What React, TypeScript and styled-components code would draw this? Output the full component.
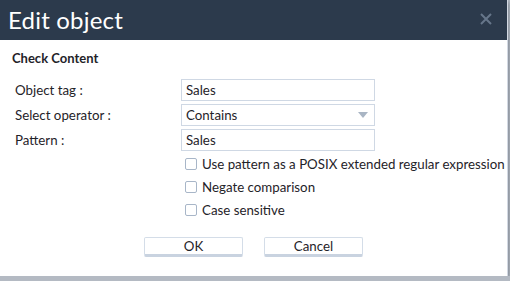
import React from 'react';
import styled, { createGlobalStyle } from 'styled-components';

const GlobalStyle = createGlobalStyle`
  html, body {
    margin: 0;
    padding: 0;
    background: #b4bac3;
    font-family: Lato, 'Open Sans', sans-serif;
  }
  * { box-sizing: border-box; }
`;

const Dialog = styled.div`
  width: 508px;
  height: 276px;
  background: #ffffff;
  border-right: 1px solid #d3d9e3;
  box-shadow: 1px 2px 4px rgba(60, 70, 85, 0.45);
  display: flex;
  flex-direction: column;
`;

const Header = styled.div`
  height: 40px;
  background: #2c3a4c;
  display: flex;
  align-items: center;
  justify-content: space-between;
  padding: 0 14px 2px 8px;
`;

const Title = styled.h1`
  margin: 0;
  font-size: 24px;
  font-weight: 400;
  color: #ffffff;
  letter-spacing: 0.2px;
`;

const Close = styled.button`
  border: 0;
  background: none;
  padding: 0;
  width: 14px;
  height: 14px;
  display: flex;
  cursor: pointer;
`;

const Body = styled.div`
  padding: 10px 4px 0 12px;
  display: flex;
  flex-direction: column;
`;

const Section = styled.div`
  font-size: 13px;
  font-weight: 700;
  color: #1f2329;
  margin-bottom: 13px;
`;

const Form = styled.div`
  display: grid;
  grid-template-columns: 166px 194px;
  row-gap: 3px;
  padding-left: 3px;
`;

const Label = styled.label`
  font-size: 13.3px;
  color: #1f2329;
  display: flex;
  align-items: center;
  height: 22px;
`;

const Field = styled.div`
  height: 22px;
  border: 1px solid #cfd8e4;
  font-size: 13.3px;
  color: #1f2329;
  padding: 0 0 0 4px;
  display: flex;
  align-items: center;
  justify-content: space-between;
`;

const Caret = styled.span`
  width: 0;
  height: 0;
  border-left: 5px solid transparent;
  border-right: 5px solid transparent;
  border-top: 6px solid #a9b5c4;
  margin-right: 6px;
`;

const Options = styled.div`
  display: flex;
  flex-direction: column;
  gap: 11px;
  margin: 7px 0 0 173px;
`;

const Option = styled.label`
  display: flex;
  align-items: center;
  gap: 5px;
  font-size: 13.3px;
  color: #1f2329;
  white-space: nowrap;
  height: 12px;
`;

const Box = styled.span`
  flex-shrink: 0;
  width: 12px;
  height: 12px;
  border: 1px solid #a8b6c8;
  border-radius: 2px;
  background: #fff;
`;

const Buttons = styled.div`
  display: flex;
  justify-content: center;
  gap: 21px;
  margin-top: 21px;
  padding-right: 8px;
`;

const Button = styled.button`
  width: 99px;
  height: 20px;
  background: #ffffff;
  border: 1px solid #d4dde8;
  border-bottom: 3px solid #c9d3e0;
  border-radius: 2px;
  font-family: inherit;
  font-size: 13.3px;
  color: #1f2329;
  padding: 0;
  line-height: 16px;
`;

const options = [
  'Use pattern as a POSIX extended regular expression',
  'Negate comparison',
  'Case sensitive',
];

export default function App() {
  return (
    <>
      <GlobalStyle />
      <Dialog>
        <Header>
          <Title>Edit object</Title>
          <Close aria-label="close">
            <svg width="14" height="14" viewBox="0 0 14 14">
              <path d="M2 2 L12 12 M12 2 L2 12" stroke="#66768a" strokeWidth="2" />
            </svg>
          </Close>
        </Header>
        <Body>
          <Section>Check Content</Section>
          <Form>
            <Label>Object tag :</Label>
            <Field>Sales</Field>
            <Label>Select operator :</Label>
            <Field>
              Contains
              <Caret />
            </Field>
            <Label>Pattern :</Label>
            <Field>Sales</Field>
          </Form>
          <Options>
            {options.map((o) => (
              <Option key={o}>
                <Box />
                {o}
              </Option>
            ))}
          </Options>
          <Buttons>
            <Button>OK</Button>
            <Button>Cancel</Button>
          </Buttons>
        </Body>
      </Dialog>
    </>
  );
}
